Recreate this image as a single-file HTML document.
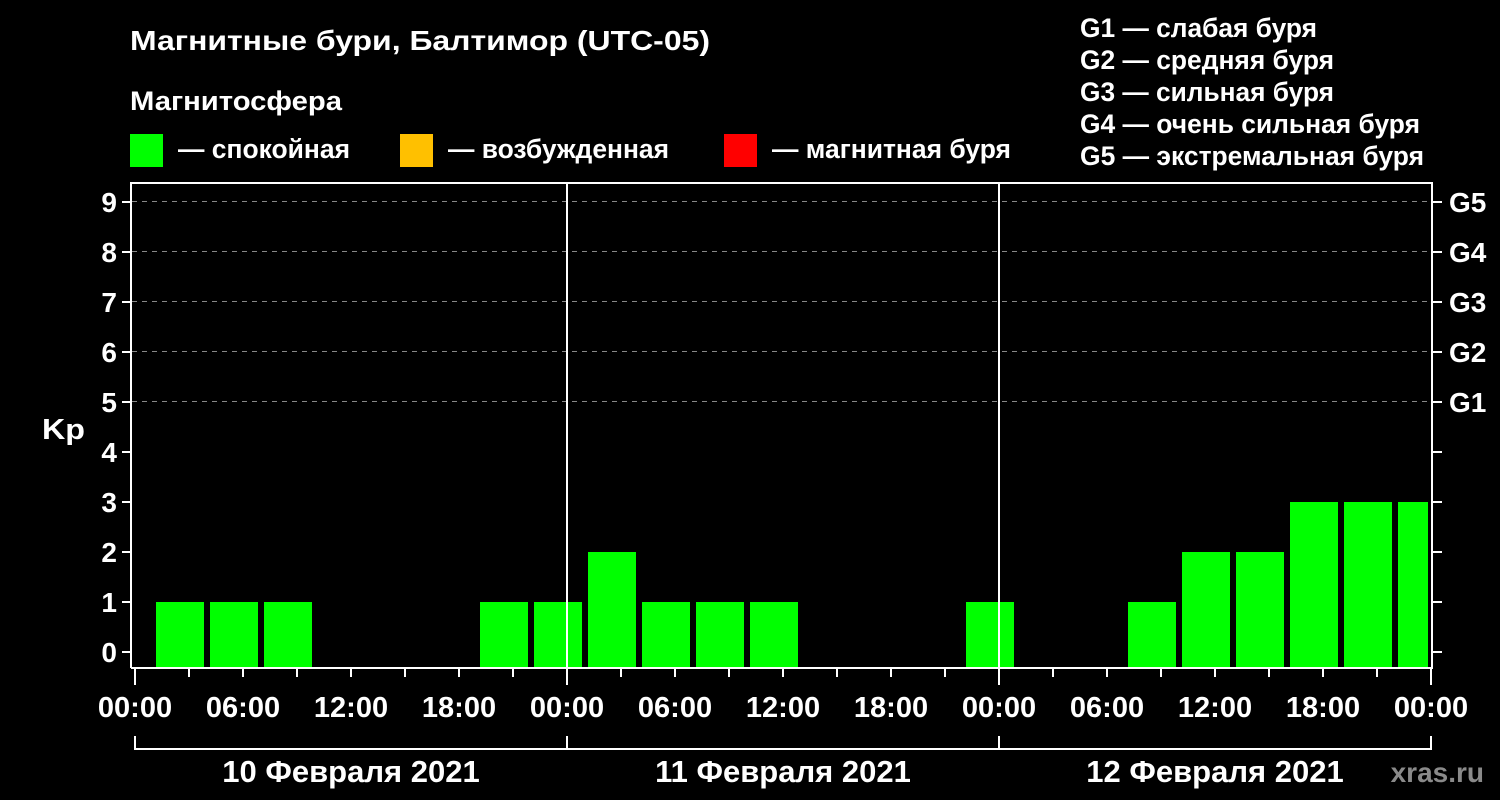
<!DOCTYPE html><html><head><meta charset="utf-8"><style>body{margin:0;background:#000}svg{display:block}text{font-family:"Liberation Sans",sans-serif;font-weight:bold;fill:#fff}</style></head><body>
<svg width="1500" height="800" viewBox="0 0 1500 800">
<rect width="1500" height="800" fill="#000"/>
<text x="130" y="50" font-size="28" textLength="580" lengthAdjust="spacingAndGlyphs">Магнитные бури, Балтимор (UTC-05)</text>
<text x="130" y="110" font-size="27" textLength="212" lengthAdjust="spacingAndGlyphs">Магнитосфера</text>
<rect x="130" y="134" width="33" height="33" fill="#00ff00"/><text x="178" y="158" font-size="27" textLength="172" lengthAdjust="spacingAndGlyphs">— спокойная</text>
<rect x="400" y="134" width="33" height="33" fill="#ffc000"/><text x="448" y="158" font-size="27" textLength="221" lengthAdjust="spacingAndGlyphs">— возбужденная</text>
<rect x="724" y="134" width="33" height="33" fill="#ff0000"/><text x="772" y="158" font-size="27" textLength="239" lengthAdjust="spacingAndGlyphs">— магнитная буря</text>
<g font-size="27"><text x="1080" y="37" textLength="237" lengthAdjust="spacingAndGlyphs">G1 — слабая буря</text><text x="1080" y="69" textLength="254" lengthAdjust="spacingAndGlyphs">G2 — средняя буря</text><text x="1080" y="101" textLength="254" lengthAdjust="spacingAndGlyphs">G3 — сильная буря</text><text x="1080" y="133" textLength="340" lengthAdjust="spacingAndGlyphs">G4 — очень сильная буря</text><text x="1080" y="165" textLength="344" lengthAdjust="spacingAndGlyphs">G5 — экстремальная буря</text></g>
<g stroke="#888" stroke-width="1" stroke-dasharray="5,5"><line x1="132" y1="201.5" x2="1431" y2="201.5"/><line x1="132" y1="251.5" x2="1431" y2="251.5"/><line x1="132" y1="301.5" x2="1431" y2="301.5"/><line x1="132" y1="351.5" x2="1431" y2="351.5"/><line x1="132" y1="401.5" x2="1431" y2="401.5"/></g>
<g fill="#00ff00">
<rect x="156" y="602" width="48" height="66"/><rect x="210" y="602" width="48" height="66"/><rect x="264" y="602" width="48" height="66"/>
<rect x="480" y="602" width="48" height="66"/><rect x="534" y="602" width="48" height="66"/><rect x="588" y="552" width="48" height="116"/>
<rect x="642" y="602" width="48" height="66"/><rect x="696" y="602" width="48" height="66"/><rect x="750" y="602" width="48" height="66"/>
<rect x="966" y="602" width="48" height="66"/><rect x="1128" y="602" width="48" height="66"/><rect x="1182" y="552" width="48" height="116"/>
<rect x="1236" y="552" width="48" height="116"/><rect x="1290" y="502" width="48" height="166"/><rect x="1344" y="502" width="48" height="166"/><rect x="1398" y="502" width="30" height="166"/>
</g>
<g stroke="#fff" stroke-width="2" fill="none">
<path d="M131 668V183H1432V668H131"/>
<line x1="567" y1="183" x2="567" y2="668"/><line x1="999" y1="183" x2="999" y2="668"/>
<path d="M122 202h9M122 252h9M122 302h9M122 352h9M122 402h9M122 452h9M122 502h9M122 552h9M122 602h9M122 652h9"/>
<path d="M1432 202h10M1432 252h10M1432 302h10M1432 352h10M1432 402h10M1432 452h10M1432 502h10M1432 552h10M1432 602h10M1432 652h10"/>
<path d="M135 668v17M189 668v9M243 668v9M297 668v9M351 668v9M405 668v9M459 668v9M513 668v9M567 668v17M621 668v9M675 668v9M729 668v9M783 668v9M837 668v9M891 668v9M945 668v9M999 668v17M1053 668v9M1107 668v9M1161 668v9M1215 668v9M1269 668v9M1323 668v9M1377 668v9M1431 668v17"/>
<path d="M135 736v13H1431V736M567 736v13M999 736v13"/>
</g>
<g font-size="28" text-anchor="end"><text x="117" y="212">9</text><text x="117" y="262">8</text><text x="117" y="312">7</text><text x="117" y="362">6</text><text x="117" y="412">5</text><text x="117" y="462">4</text><text x="117" y="512">3</text><text x="117" y="562">2</text><text x="117" y="612">1</text><text x="117" y="662">0</text></g>
<text x="42" y="439" font-size="29" textLength="43" lengthAdjust="spacingAndGlyphs">Kp</text>
<g font-size="28"><text x="1449" y="212">G5</text><text x="1449" y="262">G4</text><text x="1449" y="312">G3</text><text x="1449" y="362">G2</text><text x="1449" y="412">G1</text></g>
<g font-size="29" text-anchor="middle"><text x="135" y="717">00:00</text><text x="243" y="717">06:00</text><text x="351" y="717">12:00</text><text x="459" y="717">18:00</text><text x="567" y="717">00:00</text><text x="675" y="717">06:00</text><text x="783" y="717">12:00</text><text x="891" y="717">18:00</text><text x="999" y="717">00:00</text><text x="1107" y="717">06:00</text><text x="1215" y="717">12:00</text><text x="1323" y="717">18:00</text><text x="1431" y="717">00:00</text></g>
<g font-size="31" text-anchor="middle"><text x="351" y="782">10 Февраля 2021</text><text x="783" y="782">11 Февраля 2021</text><text x="1215" y="782">12 Февраля 2021</text></g>
<text x="1484" y="782" font-size="28" text-anchor="end" style="fill:#8a8a8a">xras.ru</text>
</svg></body></html>
